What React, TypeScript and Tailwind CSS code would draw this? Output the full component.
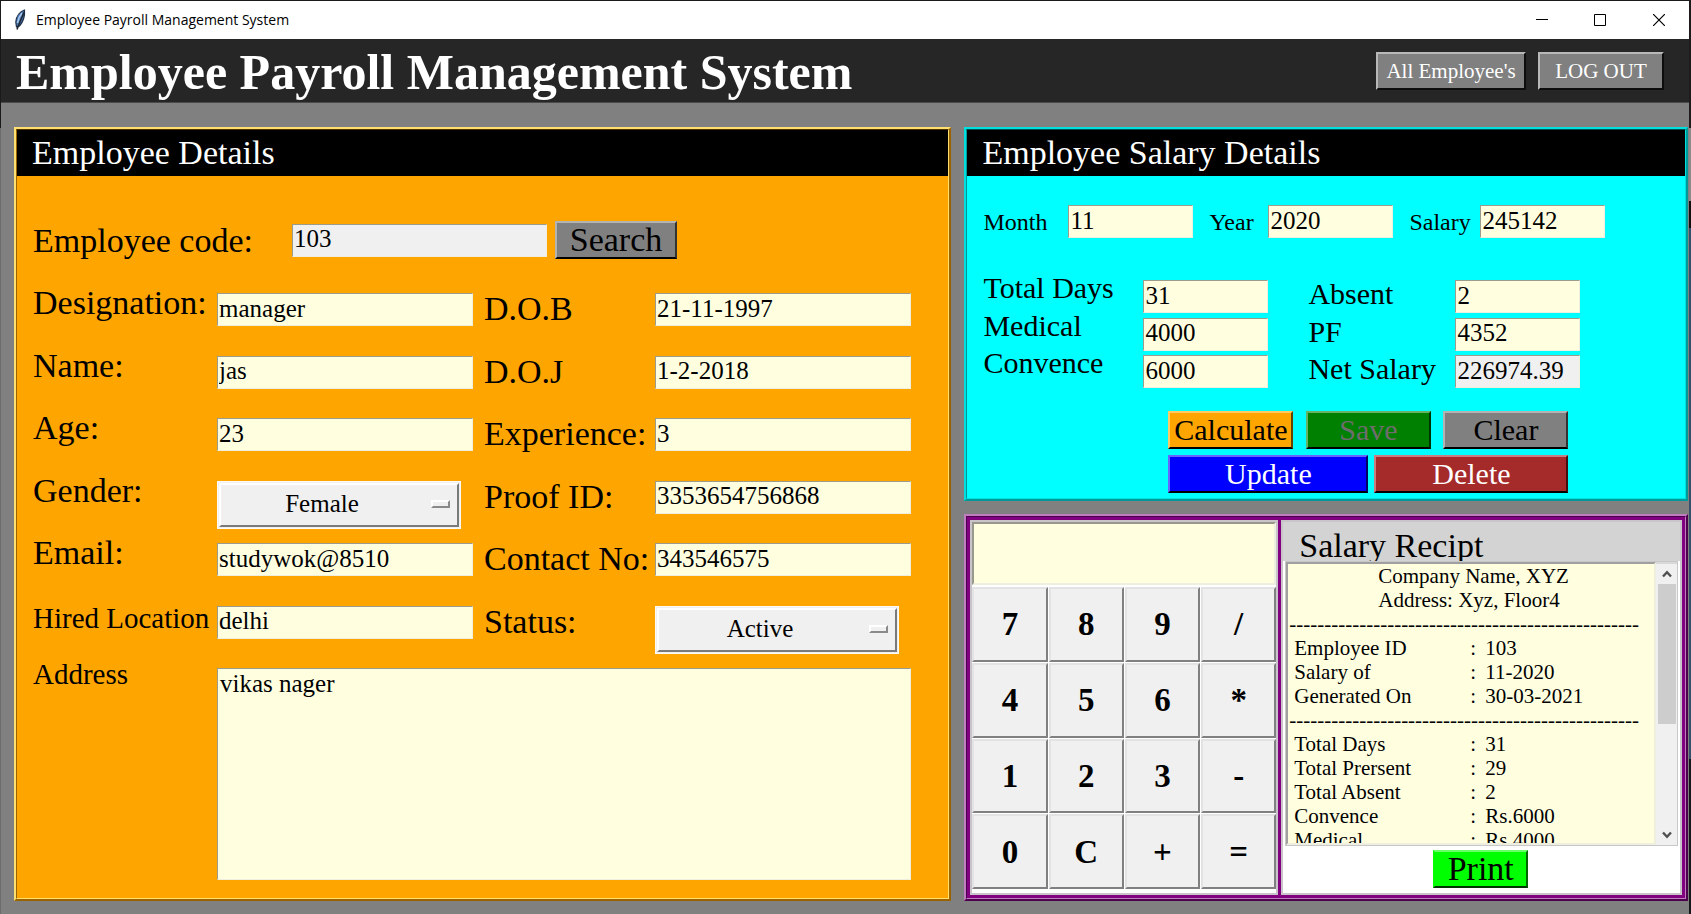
import { useState } from "react";
import type { ReactNode } from "react";

const bevel = "border-2 border-t-white/40 border-l-white/40 border-r-black/60 border-b-black";

function Panel({ outer, inner, className, children }: { outer: string; inner: string; className: string; children: ReactNode }) {
  return (
    <section className={`flex grow flex-col border-2 ${outer}`}>
      <div className={`flex flex-1 flex-col border ${inner} ${className}`}>{children}</div>
    </section>
  );
}

function PanelTitle({ children }: { children: ReactNode }) {
  return <h2 className="h-[46px] bg-black pl-[15px] text-[34px] leading-[46px] text-white">{children}</h2>;
}

function Entry({ id, value, className, readOnly = false }: { id: string; value: string; className: string; readOnly?: boolean }) {
  return (
    <input
      id={id}
      type="text"
      defaultValue={value}
      readOnly={readOnly}
      className={`h-[33px] border border-t-[#9c9c8c] border-l-[#9c9c8c] border-r-[#efefe0] border-b-[#efefe0] pb-[2px] pl-px text-[25px] outline-none ${
        readOnly ? "bg-[#f0f0f0]" : "bg-[#ffffe0]"
      } ${className}`}
    />
  );
}

function OptionMenu({ id, value, options }: { id: string; value: string; options: string[] }) {
  return (
    <div className="relative h-12 w-[244px] border border-[#fafafa] bg-[#f0f0f0] p-px">
      <select
        id={id}
        defaultValue={value}
        className="block size-full appearance-none border-2 border-t-white border-l-white border-r-[#7a7a7a] border-b-[#7a7a7a] bg-[#f0f0f0] pr-[34px] pb-[2px] text-center text-[25px] [text-align-last:center] outline-none"
      >
        {options.map((o) => (
          <option key={o}>{o}</option>
        ))}
      </select>
      <span className="pointer-events-none absolute top-[18px] right-[10px] h-2 w-[19px] border-2 border-t-white border-l-white border-r-[#8a8a8a] border-b-[#8a8a8a] bg-[#f0f0f0]" />
    </div>
  );
}

type Field = { id: string; label: string; value: string; options?: string[]; small?: boolean };

const leftFields: Field[] = [
  { id: "designation", label: "Designation:", value: "manager" },
  { id: "name", label: "Name:", value: "jas" },
  { id: "age", label: "Age:", value: "23" },
  { id: "gender", label: "Gender:", value: "Female", options: ["Female", "Male", "Other"] },
  { id: "email", label: "Email:", value: "studywok@8510" },
  { id: "location", label: "Hired Location", value: "delhi", small: true },
];

const rightFields: Field[] = [
  { id: "dob", label: "D.O.B", value: "21-11-1997" },
  { id: "doj", label: "D.O.J", value: "1-2-2018" },
  { id: "experience", label: "Experience:", value: "3" },
  { id: "proof", label: "Proof ID:", value: "3353654756868" },
  { id: "contact", label: "Contact No:", value: "343546575" },
  { id: "status", label: "Status:", value: "Active", options: ["Active", "Inactive"] },
];

function FieldCells({ field, side }: { field: Field; side: "left" | "right" }) {
  const text = field.small ? "pt-[6px] text-[29px] leading-8" : side === "left" ? "text-[34px] leading-10" : "pt-[6px] text-[34px] leading-10";
  return (
    <>
      <label htmlFor={field.id} className={`whitespace-nowrap ${text}`}>
        {field.label}
      </label>
      <div className="pt-[10px]">
        {field.options ? <OptionMenu id={field.id} value={field.value} options={field.options} /> : <Entry id={field.id} value={field.value} className="block w-64" />}
      </div>
    </>
  );
}

function EmployeeDetails() {
  return (
    <Panel
      outer="border-t-[#ffdf70] border-l-[#ffdf70] border-r-[#996300] border-b-[#996300]"
      inner="border-t-[#4d3200] border-l-[#996300] border-r-[#ffdf70] border-b-[#ffdf70]"
      className="bg-[#ffa500]"
    >
      <PanelTitle>Employee Details</PanelTitle>
      <form className="flex flex-col pl-4" onSubmit={(e) => e.preventDefault()}>
        <div className="mt-[45px] flex items-center">
          <label htmlFor="code" className="w-[259px] pt-[2px] text-[34px] leading-9">
            Employee code:
          </label>
          <Entry id="code" value="103" readOnly className="w-[255px]" />
          <button className={`ml-2 h-[38px] w-[122px] bg-[#808080] text-[34px] leading-[34px] ${bevel}`}>Search</button>
        </div>
        <div className="mt-6 grid h-[375px] grid-cols-[184px_267px_171px_256px] grid-rows-6">
          {leftFields.map((f, i) => [<FieldCells key={f.id} field={f} side="left" />, <FieldCells key={rightFields[i].id} field={rightFields[i]} side="right" />])}
        </div>
        <div className="flex">
          <label htmlFor="address" className="w-[184px] text-[29px] leading-8">
            Address
          </label>
          <textarea
            id="address"
            defaultValue="vikas nager"
            className="mt-[10px] h-[212px] w-[694px] resize-none border border-t-[#9c9c8c] border-l-[#9c9c8c] border-r-[#efefe0] border-b-[#efefe0] bg-[#ffffe0] pl-[2px] text-[25px] leading-[29px] outline-none"
          />
        </div>
      </form>
    </Panel>
  );
}

const salaryRows = [
  [
    { id: "days", label: "Total Days", value: "31" },
    { id: "absent", label: "Absent", value: "2" },
  ],
  [
    { id: "medical", label: "Medical", value: "4000" },
    { id: "pf", label: "PF", value: "4352" },
  ],
  [
    { id: "convence", label: "Convence", value: "6000" },
    { id: "net", label: "Net Salary", value: "226974.39", readOnly: true },
  ],
];

function SalaryDetails() {
  const action = `h-[38px] text-[30px] leading-[34px] ${bevel}`;
  return (
    <Panel
      outer="border-t-[#00dfdf] border-l-[#00dfdf] border-r-[#009999] border-b-[#009999]"
      inner="border-t-[#004d4d] border-l-[#009999] border-r-[#00dfdf] border-b-[#00dfdf]"
      className="bg-[#00ffff] pb-[5px]"
    >
      <PanelTitle>Employee Salary Details</PanelTitle>
      <form className="flex flex-col pl-4" onSubmit={(e) => e.preventDefault()}>
        <div className="mt-[29px] flex text-[24px] leading-[35px]">
          <label htmlFor="month" className="w-[85px]">Month</label>
          <Entry id="month" value="11" className="w-[125px]" />
          <label htmlFor="year" className="ml-4 w-[59px]">Year</label>
          <Entry id="year" value="2020" className="w-[125px]" />
          <label htmlFor="salary" className="ml-4 w-[71px]">Salary</label>
          <Entry id="salary" value="245142" className="w-[125px]" />
        </div>
        <div className="mt-8 grid h-[113px] grid-cols-[160px_165px_147px_125px] grid-rows-3 text-[30px] leading-8">
          {salaryRows.map(([a, b]) => [
            <label key={a.id} htmlFor={a.id}>{a.label}</label>,
            <div key={a.id + "-entry"} className="pt-2">
              <Entry id={a.id} value={a.value} className="block w-[125px]" />
            </div>,
            <label key={b.id} htmlFor={b.id} className="pt-[6px]">{b.label}</label>,
            <div key={b.id + "-entry"} className="pt-2">
              <Entry id={b.id} value={b.value} readOnly={"readOnly" in b} className="block w-[125px]" />
            </div>,
          ])}
        </div>
        <div className="mt-[26px] ml-[185px] flex w-[400px] flex-col gap-[6px]">
          <div className="flex justify-between">
            <button className={`w-[125px] bg-[#ffa500] ${action}`}>Calculate</button>
            <button disabled className={`w-[125px] bg-[#008000] text-[#6d6d6d] ${action}`}>Save</button>
            <button className={`w-[125px] bg-[#808080] ${action}`}>Clear</button>
          </div>
          <div className="flex justify-between">
            <button className={`w-[200px] bg-[#0000ff] text-white ${action}`}>Update</button>
            <button className={`w-[194px] bg-[#a52a2a] text-white ${action}`}>Delete</button>
          </div>
        </div>
      </form>
    </Panel>
  );
}

const keys = ["7", "8", "9", "/", "4", "5", "6", "*", "1", "2", "3", "-", "0", "C", "+", "="];

function Calculator() {
  const [display, setDisplay] = useState("");
  const press = (k: string) => setDisplay((d) => (k === "C" ? "" : k === "=" ? d : d + k));
  return (
    <div className="flex flex-col border-2 border-[#c9c4c9] bg-white pb-1">
      <input
        aria-label="Calculator display"
        readOnly
        value={display}
        className="h-[63px] w-full border-2 border-t-[#98988c] border-l-[#98988c] border-r-[#efefe0] border-b-[#efefe0] bg-[#ffffe0] px-1 text-right text-[33px] font-bold outline-none"
      />
      <div className="mt-[2px] grid flex-1 grid-cols-4 grid-rows-4 gap-px">
        {keys.map((k) => (
          <button
            key={k}
            onClick={() => press(k)}
            className="border-2 border-t-[#e3e3e3] border-l-[#e3e3e3] border-r-[#808080] border-b-[#808080] bg-[#f0f0f0] text-[33px] leading-[38px] font-bold"
          >
            {k}
          </button>
        ))}
      </div>
    </div>
  );
}

const employeeLines = [
  ["Employee ID", "103"],
  ["Salary of", "11-2020"],
  ["Generated On", "30-03-2021"],
];

const totalLines = [
  ["Total Days", "31"],
  ["Total Prersent", "29"],
  ["Total Absent", "2"],
  ["Convence", "Rs.6000"],
  ["Medical", "Rs.4000"],
];

function ReceiptLines({ lines }: { lines: string[][] }) {
  return (
    <dl className="grid grid-cols-[176px_15px_1fr] pl-[5px]">
      {lines.map(([k, v]) => [
        <dt key={k}>{k}</dt>,
        <span key={k + "-colon"}>:</span>,
        <dd key={k + "-value"}>{v}</dd>,
      ])}
    </dl>
  );
}

function Receipt() {
  const rule = "-".repeat(50);
  return (
    <div className="flex flex-col border-2 border-[#c9c4c9] bg-white">
      <h2 className="h-[39px] overflow-hidden bg-[#d3d3d3] pl-4 text-[34px] leading-[47px]">Salary Recipt</h2>
      <div className="mx-[2px] flex h-[285px] border border-[#c8c8c8] bg-[#f0f0f0]">
        <div className="h-full flex-1 overflow-hidden border-2 border-t-[#a0a0a0] border-r-[#efefe0] border-b-[#efefe0] border-l-[#a0a0a0] bg-[#ffffe0] pl-px text-[21px] leading-6 whitespace-nowrap">
          <p className="pl-[89px]">Company Name, XYZ</p>
          <p className="pl-[89px]">Address: Xyz, Floor4</p>
          <p>{rule}</p>
          <ReceiptLines lines={employeeLines} />
          <p>{rule}</p>
          <ReceiptLines lines={totalLines} />
        </div>
        <div className="flex w-[21px] flex-col items-center border-t-2 border-[#d8d8d8]">
          <svg className="my-[6px] h-2 w-[10px]" viewBox="0 0 10 8" fill="none" stroke="#505050" strokeWidth="2.4">
            <path d="M1 6.5 5 2.2 9 6.5" />
          </svg>
          <div className="h-[140px] w-[18px] bg-[#cdcdcd]" />
          <svg className="mt-auto mb-[6px] h-2 w-[10px]" viewBox="0 0 10 8" fill="none" stroke="#505050" strokeWidth="2.4">
            <path d="M1 1.5 5 5.8 9 1.5" />
          </svg>
        </div>
      </div>
      <button className="mt-1 ml-[150px] h-[38px] w-[95px] border-2 border-t-[#66ff66] border-r-[#006600] border-b-[#003300] border-l-[#00ff00] bg-[#00ff00] text-[34px] leading-[34px]">
        Print
      </button>
    </div>
  );
}

function TitleBar() {
  return (
    <div className="flex h-[39px] items-center border-t border-[#1a1a1a] bg-white">
      <svg className="ml-3 h-[22px] w-4" viewBox="0 0 16 22">
        <path d="M11.500 1C7 2.500 3.200 7 2.800 13l.7 5L6.500 17C10 13 12 7 11.500 1Z" fill="#4a7ab8" stroke="#1f3048" strokeWidth="1.200" />
        <path d="M9 4C6.500 7 5 11 4.500 14" stroke="#a9c8ea" strokeWidth="1.600" fill="none" />
        <path d="M10.800 3.500C9 9 6.500 13 4 20.500" stroke="#1c2430" strokeWidth="1.500" fill="none" />
      </svg>
      <span className="ml-[7px] font-['Open_Sans','Noto_Sans',sans-serif] text-[14px] leading-5">Employee Payroll Management System</span>
      <div className="ml-auto flex">
        <button aria-label="Minimize" className="flex h-9 w-[58px] items-center justify-center">
          <svg width="12" height="12" viewBox="0 0 12 12"><path d="M0 5.500h12" stroke="#000" /></svg>
        </button>
        <button aria-label="Maximize" className="flex h-9 w-[58px] items-center justify-center">
          <svg width="12" height="12" viewBox="0 0 12 12"><path d="M.5.5h11v11H.5z" fill="none" stroke="#000" /></svg>
        </button>
        <button aria-label="Close" className="flex h-9 w-[60px] items-center justify-center">
          <svg width="12" height="12" viewBox="0 0 12 12"><path d="M0 0l12 12M12 0L0 12" stroke="#000" strokeWidth="1.200" /></svg>
        </button>
      </div>
    </div>
  );
}

export default function App() {
  const nav = "h-[38px] border-2 border-t-[#b8b8b8] border-l-[#b8b8b8] border-r-[#0d0d0d] border-b-[#0d0d0d] bg-[#808080] text-[21px] leading-6 text-white";
  return (
    <div className="flex min-h-screen bg-[#808080] font-['Liberation_Serif',serif] text-black">
      <div className="w-px bg-linear-to-b from-[#1a1a1a] from-14% to-[#6c6c6c] to-14%" />
      <div className="flex min-w-0 flex-1 flex-col">
        <TitleBar />
        <header className="flex h-16 items-center border-b border-[#4a4a4a] bg-[#262626] pr-[25px] pl-[15px]">
          <h1 className="pt-[2px] text-[50px] leading-[60px] font-bold text-white">Employee Payroll Management System</h1>
          <button className={`ml-auto w-[150px] ${nav}`}>All Employee's</button>
          <button className={`ml-3 w-[126px] ${nav}`}>LOG OUT</button>
        </header>
        <main className="grid flex-1 grid-cols-[938fr_724fr] gap-[13px] pt-6 pr-px pb-[13px] pl-[13px]">
          <EmployeeDetails />
          <div className="flex flex-col gap-[13px]">
            <div className="flex flex-col">
              <SalaryDetails />
            </div>
            <Panel
              outer="border-t-[#bf7fbf] border-l-[#bf7fbf] border-r-[#4d004d] border-b-[#4d004d]"
              inner="border-t-[#4d004d] border-l-[#4d004d] border-r-[#bf7fbf] border-b-[#bf7fbf]"
              className="bg-[#800080] p-[3px]"
            >
              <div className="grid flex-1 grid-cols-[308fr_401fr] gap-[3px]">
                <Calculator />
                <Receipt />
              </div>
            </Panel>
          </div>
        </main>
      </div>
      <div className="w-[2px] bg-[linear-gradient(#1c1c1c_14%,#8a8a8a_14%,#8a8a8a_22%,#111_22%,#111_25%,#34506a_25%,#34506a_83%,#16191c_83%)]" />
    </div>
  );
}
